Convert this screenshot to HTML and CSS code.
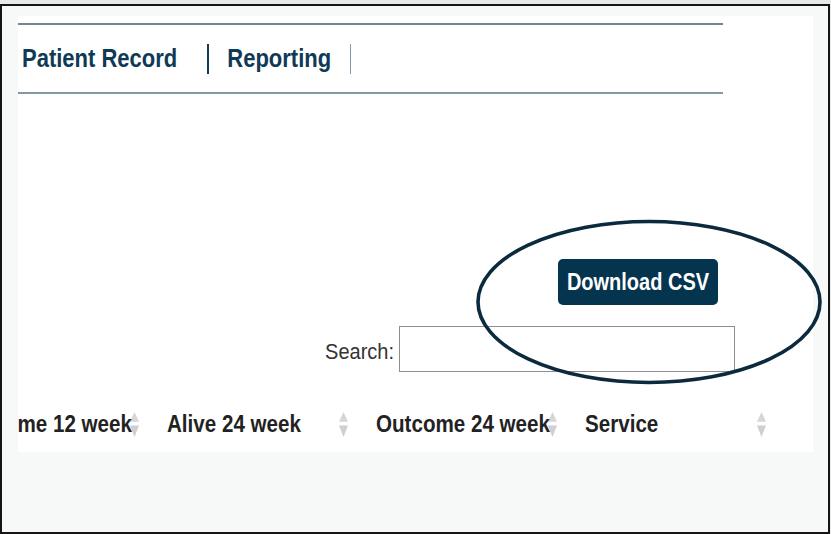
FILE: index.html
```html
<!DOCTYPE html>
<html lang="en">
<head>
<meta charset="utf-8">
<title>Reporting</title>
<link rel="stylesheet" href="styles.css">
</head>
<body>
<div class="frame">
  <div class="panel">
    <nav class="nav">
      <span class="nav-link"><span class="tall">Patient Record</span></span>
      <span class="divider dark"></span>
      <span class="nav-link"><span class="tall">Reporting</span></span>
      <span class="divider light"></span>
    </nav>
    <div class="toolbar">
      <button class="btn"><span class="tall">Download CSV</span></button>
    </div>
    <div class="search-row">
      <label class="search-label" for="q"><span class="tall-s">Search:</span></label>
      <input id="q" class="search-input" type="text">
    </div>
    <div class="table-wrap">
      <div class="thead">
        <div class="th"><span class="th-text"><span class="tall-s">Outcome 12 week</span></span><svg class="sort" viewBox="0 0 10 28"><path d="M5 0 L10 11 L0 11 Z" fill="#d6d6d6"/><path d="M0 15 L10 15 L5 28 Z" fill="#cfcfcf"/></svg></div>
        <div class="th"><span class="th-text"><span class="tall-s">Alive 24 week</span></span><svg class="sort" viewBox="0 0 10 28"><path d="M5 0 L10 11 L0 11 Z" fill="#d6d6d6"/><path d="M0 15 L10 15 L5 28 Z" fill="#cfcfcf"/></svg></div>
        <div class="th"><span class="th-text"><span class="tall-s">Outcome 24 week</span></span><svg class="sort" viewBox="0 0 10 28"><path d="M5 0 L10 11 L0 11 Z" fill="#d6d6d6"/><path d="M0 15 L10 15 L5 28 Z" fill="#cfcfcf"/></svg></div>
        <div class="th"><span class="th-text"><span class="tall-s">Service</span></span><svg class="sort" viewBox="0 0 10 28"><path d="M5 0 L10 11 L0 11 Z" fill="#d6d6d6"/><path d="M0 15 L10 15 L5 28 Z" fill="#cfcfcf"/></svg></div>
      </div>
    </div>
  </div>
  <svg class="annotation" viewBox="0 0 346 166" aria-hidden="true">
    <ellipse cx="173" cy="83" rx="171" ry="80.5" fill="none" stroke="#0c2a3e" stroke-width="3.6"/>
  </svg>
</div>
</body>
</html>
```

FILE: styles.css
```css
* { box-sizing: border-box; }

html, body {
  margin: 0;
  padding: 0;
}

body {
  background: #e8eaea;
  font-family: "Liberation Sans", Arial, sans-serif;
  width: 831px;
  height: 534px;
  overflow: hidden;
}

.frame {
  position: relative;
  margin-top: 4px;
  width: 830px;
  height: 530px;
  border: 2px solid #151515;
  background: #f7f9f9;
  padding: 10px 0 0 16px;
}

.panel {
  width: 795px;
  height: 436px;
  background: #ffffff;
  overflow: hidden;
  padding-top: 7px;
}

.nav {
  width: 705px;
  height: 71px;
  border-top: 2px solid #6f8896;
  border-bottom: 2px solid #8199a4;
  display: flex;
  align-items: center;
  padding-left: 4px;
}

.nav-link {
  color: #0f3a56;
  font-weight: bold;
  font-size: 22px;
  line-height: 26px;
}

.tall {
  display: inline-block;
  transform: scaleY(1.2);
}

.tall-s {
  display: inline-block;
  transform: scaleY(1.12);
}

.divider {
  display: block;
  height: 30px;
  align-self: center;
}

.divider.dark {
  width: 2px;
  background: #123d58;
  margin: 0 18px 0 30px;
}

.divider.light {
  width: 1px;
  background: #7f9aa8;
  margin-left: 19px;
}

.toolbar {
  display: flex;
  justify-content: flex-end;
  padding-right: 95px;
  margin-top: 165px;
}

.btn {
  width: 160px;
  height: 46px;
  border: none;
  border-radius: 5px;
  background: #05344f;
  color: #ffffff;
  font-family: "Liberation Sans", Arial, sans-serif;
  font-weight: bold;
  font-size: 20px;
  padding: 0;
}

.search-row {
  display: flex;
  justify-content: flex-end;
  align-items: center;
  padding-right: 78px;
  margin-top: 21px;
}

.search-label {
  color: #333333;
  font-size: 20px;
  margin-right: 5px;
  margin-top: 4px;
}

.search-input {
  width: 336px;
  height: 46px;
  border: 1px solid #8e8e8e;
  background: #ffffff;
  margin: 0;
}

.table-wrap {
  margin-top: 32px;
  margin-left: -70px;
}

.thead {
  display: flex;
  height: 40px;
}

.th {
  flex: 0 0 209px;
  min-width: 0;
  display: flex;
  align-items: center;
  padding: 0 18px 0 10px;
  font-weight: bold;
  font-size: 20.6px;
  color: #222222;
  white-space: nowrap;
}

.th-text {
  flex: 1 1 0;
  min-width: 0;
}

.sort {
  width: 9px;
  height: 27px;
  flex: 0 0 9px;
}

.annotation {
  position: absolute;
  left: 474px;
  top: 213px;
  width: 346px;
  height: 166px;
}
```
